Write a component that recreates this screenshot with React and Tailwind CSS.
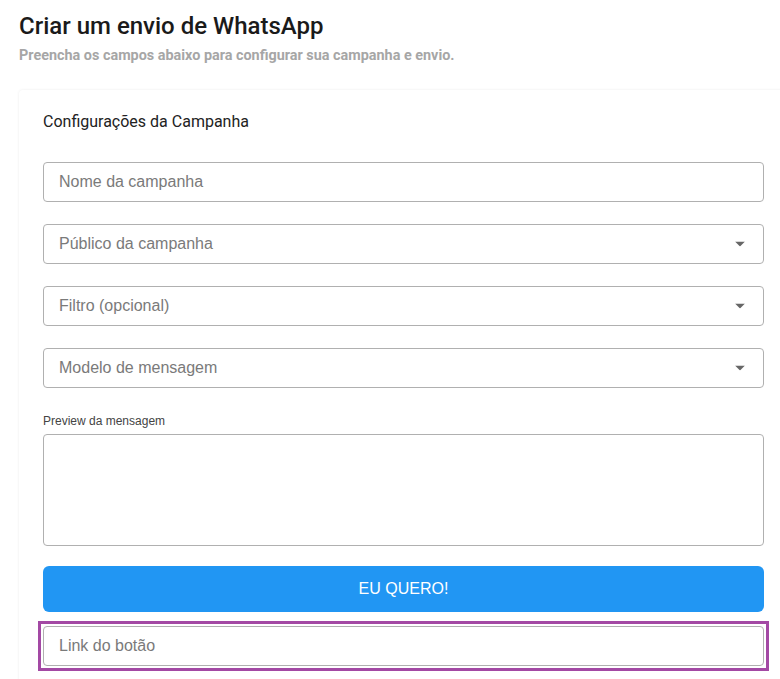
const fieldBase =
  "w-full h-10 rounded border border-[#b0b0b0] bg-white px-[15px] text-base placeholder:text-[#7a7a7a] outline-none";

function Caret() {
  return (
    <svg className="absolute right-[19px] top-1/2 -translate-y-1/2" width="10" height="5" viewBox="0 0 10 5">
      <path d="M0 0h10L5 5z" fill="#666" />
    </svg>
  );
}

function SelectField({ label }) {
  return (
    <div className="relative">
      <div className={`${fieldBase} flex items-center text-[#7a7a7a]`}>{label}</div>
      <Caret />
    </div>
  );
}

export default function App() {
  return (
    <div className="min-h-screen w-[780px] overflow-hidden bg-white pl-[19px] pt-[12px] font-['Liberation_Sans',Arial,sans-serif]">
      {/* Header */}
      <h1 className="font-['Roboto',sans-serif] text-[24px] font-medium leading-[28px] text-[#1a1a1a]">
        Criar um envio de WhatsApp
      </h1>
      <p className="mt-[7px] font-['Roboto',sans-serif] text-[14.4px] font-bold leading-[17px] text-[#a6a6a6]">
        Preencha os campos abaixo para configurar sua campanha e envio.
      </p>

      {/* Card */}
      <div className="mt-[26px] w-[769px] rounded bg-white px-6 pt-[22px] pb-4 shadow-[0_0_3px_rgba(0,0,0,0.08)]">
        <h2 className="font-['Roboto',sans-serif] text-[16px] leading-5 text-[#222]">
          Configurações da Campanha
        </h2>

        <div className="mt-[30px] flex flex-col gap-[22px] text-[#333]">
          <input className={fieldBase} placeholder="Nome da campanha" />
          <SelectField label="Público da campanha" />
          <SelectField label="Filtro (opcional)" />
          <SelectField label="Modelo de mensagem" />
        </div>

        <label className="mt-[26px] block text-[12px] leading-[15px] text-[#444]">Preview da mensagem</label>
        <textarea className="mt-[5px] block h-[112px] w-full resize-none rounded border border-[#b0b0b0] outline-none" />

        <button className="mt-[20px] h-[46px] w-full rounded-md bg-[#2196f3] text-base text-white">
          EU QUERO!
        </button>

        <div className="-mx-[5px] mt-[9px] border-[3px] border-[#a349a4] p-[2px]">
          <input className={fieldBase} placeholder="Link do botão" />
        </div>
      </div>
    </div>
  );
}
